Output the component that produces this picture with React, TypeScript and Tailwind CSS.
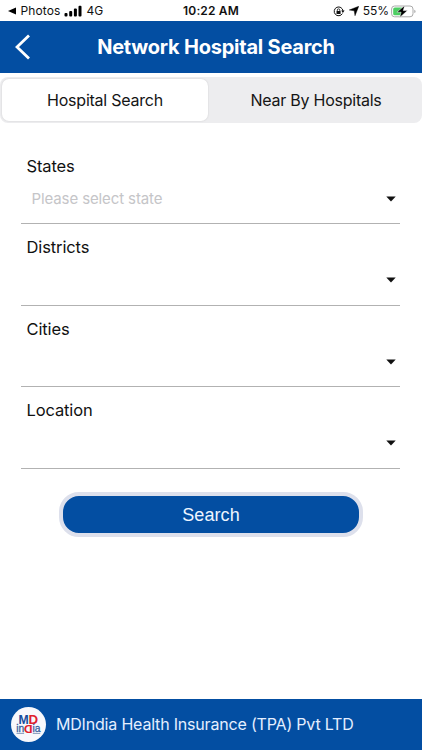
import React from "react";

const fields = [
  { label: "States", placeholder: "Please select state" },
  { label: "Districts", placeholder: "" },
  { label: "Cities", placeholder: "" },
  { label: "Location", placeholder: "" },
];

function StatusBar() {
  return (
    <div className="grid h-[21px] shrink-0 grid-cols-[1fr_auto_1fr] items-center bg-white pt-[1px] text-[12px] leading-[20px] text-[#111]">
      <div className="flex items-center pl-[8px]">
        <svg width="8" height="8" viewBox="0 0 8 8" className="mr-[4.5px]">
          <path d="M0 4 8 .4v7.2Z" fill="#000" />
        </svg>
        <span className="tracking-[0.1px]">Photos</span>
        <svg width="18" height="12" viewBox="0 0 18 12" className="ml-[4px] mr-[4px]" fill="#000">
          <rect x="0.5" y="8" width="3" height="3.5" rx="1" />
          <rect x="5.2" y="6" width="3" height="5.5" rx="1" />
          <rect x="9.9" y="3.5" width="3" height="8" rx="1" />
          <rect x="14.5" y="0.8" width="3" height="10.7" rx="1" />
        </svg>
        <span>4G</span>
      </div>
      <span className="text-[12px] font-semibold tracking-[0.15px]">10:22 AM</span>
      <div className="flex items-center justify-end pr-[6px]">
        <svg width="12" height="11" viewBox="0 0 12 11" className="mr-[4px]">
          <path d="M9.4 7.6A4.4 4.4 0 1 1 10 5" fill="none" stroke="#111" strokeWidth="1" />
          <path d="M8.2 4.6h3.4L9.9 7Z" fill="#111" />
          <rect x="3.5" y="5" width="4.1" height="2.9" rx=".5" fill="#111" />
          <path d="M4.3 5V4.1a1.25 1.25 0 0 1 2.5 0V5" fill="none" stroke="#111" strokeWidth=".8" />
        </svg>
        <svg width="10" height="10" viewBox="0 0 10 10" className="mr-[4px]">
          <path d="M9.8.2 6 9.8 5.2 4.8.2 4Z" fill="#000" stroke="#000" strokeWidth=".4" strokeLinejoin="round" />
        </svg>
        <span>55%</span>
        <svg width="25" height="13" viewBox="0 0 25 13" className="ml-[2px]">
          <rect x=".6" y="1" width="21.4" height="10.8" rx="3" fill="#fff" stroke="#aaa" strokeWidth="1" />
          <rect x="2.2" y="2.5" width="9.8" height="7.8" rx="1.6" fill="#4cce62" />
          <path d="M23.4 4.7c1.5.6 1.5 2.8 0 3.4Z" fill="#999" />
          <path d="M13.7.5 5.9 7.2h4.2L8.7 12.4l7.8-6.8h-4.2Z" fill="#000" stroke="#fff" strokeWidth=".5" />
        </svg>
      </div>
    </div>
  );
}

function Header() {
  return (
    <header className="grid h-[52px] shrink-0 grid-cols-[48px_1fr_38px] items-center bg-[#034ea2] text-white">
      <svg width="16" height="26" viewBox="0 0 16 26" className="ml-[15px]">
        <path d="M14 1.5 2 13l12 11.5" fill="none" stroke="#fff" strokeWidth="2.8" />
      </svg>
      <h1 className="whitespace-nowrap text-center text-[20px] font-bold leading-[24px] tracking-[-0.23px]">
        Network Hospital Search
      </h1>
    </header>
  );
}

function Tabs() {
  return (
    <div className="mt-[4px] flex h-[46px] shrink-0 rounded-[8px] bg-[#ededef] py-[2px] pl-[2px] text-[16px] tracking-[-0.24px] text-[#151515]">
      <button className="w-[206px] rounded-[7px] bg-white pb-px shadow-[0_0_2px_rgba(0,0,0,0.14)]">
        Hospital Search
      </button>
      <button className="flex-1 pl-[2px] pb-px">Near By Hospitals</button>
    </div>
  );
}

function Field({ label, placeholder }: { label: string; placeholder: string }) {
  return (
    <div className="flex h-[81.6px] flex-col border-b border-[#b2b2b2]">
      <label className="pl-[5.5px] pt-[11.2px] text-[16.5px] leading-[24px] tracking-[-0.12px] text-[#111]">{label}</label>
      <div className="mt-[9px] flex h-[24px] items-center justify-between pl-[10.5px] pr-[4.5px]">
        <span className="text-[15px] leading-[24px] tracking-[-0.11px] text-[#c5c5c8]">{placeholder}</span>
        <svg width="10" height="6" viewBox="0 0 10 6">
          <path d="M.3.5h9.4L5 5.5Z" fill="#111" />
        </svg>
      </div>
    </div>
  );
}

function Logo() {
  return (
    <div className="h-[35px] w-[35px] rounded-full bg-[#f7f8fc]">
      <svg width="35" height="35" viewBox="0 0 35 35" fontFamily="Liberation Sans, sans-serif">
        <text x="7.6" y="17" fontSize="12" fontWeight="700" fill="#164d9c" textLength="10.2" lengthAdjust="spacingAndGlyphs">M</text>
        <text x="17.6" y="17" fontSize="12" fontWeight="700" fill="#df202c" textLength="9.6" lengthAdjust="spacingAndGlyphs">D</text>
        <text x="5.2" y="25" fontSize="10.5" fill="#375f9e" stroke="#375f9e" strokeWidth=".3" textLength="8" lengthAdjust="spacingAndGlyphs">in</text>
        <text x="-21.6" y="-17.6" transform="rotate(180)" fontSize="10.8" fontWeight="700" fill="#df202c" textLength="8.6" lengthAdjust="spacingAndGlyphs">D</text>
        <text x="21.4" y="25" fontSize="10.5" fill="#375f9e" stroke="#375f9e" strokeWidth=".3" textLength="8" lengthAdjust="spacingAndGlyphs">ia</text>
        <path d="M5.5 26.4h7.6M21.8 26.4h7.4" stroke="#55739f" strokeWidth=".7" />
      </svg>
    </div>
  );
}

export default function App() {
  return (
    <div className="flex h-[750px] w-[422px] flex-col overflow-hidden bg-white font-['Inter',sans-serif]">
      <StatusBar />
      <Header />
      <Tabs />
      <main className="flex flex-1 flex-col pl-[21px] pr-[22px] pt-[19.4px]">
        {fields.map((field) => (
          <Field key={field.label} {...field} />
        ))}
        <button className="ml-[38px] mt-[23.2px] h-[45.5px] w-[304px] rounded-[20px] border-4 border-[#dde0ec] bg-[#034ea2] font-['Liberation_Sans',sans-serif] text-[18px] leading-[24px] tracking-[0.1px] text-[#eef5ff]">
          Search
        </button>
      </main>
      <footer className="flex h-[51px] shrink-0 items-center bg-[#034ea2] pl-[11px]">
        <Logo />
        <span className="ml-[10px] whitespace-nowrap pb-[2px] text-[16px] tracking-[-0.19px] text-[#e5efff]">
          MDIndia Health Insurance (TPA) Pvt LTD
        </span>
      </footer>
    </div>
  );
}
